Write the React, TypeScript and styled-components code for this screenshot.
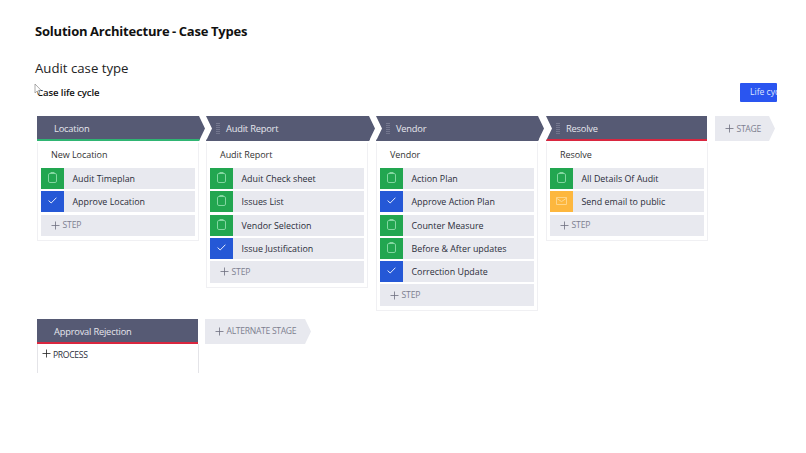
import React from 'react';
import styled, { createGlobalStyle } from 'styled-components';

const GlobalStyle = createGlobalStyle`
    html, body {
        margin: 0;
        background: #fff;
        font-family: 'Open Sans', 'Liberation Sans', sans-serif;
    }
`;

const HEADER = '#565a74';
const ROW = '#e8e9ef';
const GREEN = '#22a650';
const BLUE = '#2558d6';
const ORANGE = '#fdb73e';

const Page = styled.div`
    position: relative;
    width: 806px;
    height: 453px;
    padding: 21px 0 0 35px;
    box-sizing: border-box;
    overflow: hidden;
`;

const Title = styled.h1`
    margin: 0;
    height: 20px;
    font-size: 13px;
    line-height: 20px;
    font-weight: 700;
    letter-spacing: -0.2px;
    word-spacing: -0.5px;
    color: #111;
`;

const SubTitle = styled.h2`
    margin: 17px 0 0;
    height: 20px;
    font-size: 13.2px;
    line-height: 20px;
    font-weight: 400;
    color: #222;
`;

const CycleBar = styled.div`
    display: flex;
    justify-content: space-between;
    align-items: center;
    width: 740px;
    height: 19px;
    margin: 5px 0 0 2px;
`;

const CycleLabel = styled.span`
    font-size: 9.6px;
    font-weight: 600;
    letter-spacing: -0.1px;
    color: #111;
`;

const CycleButton = styled.div`
    width: 37px;
    height: 19px;
    padding-left: 10px;
    box-sizing: border-box;
    overflow: hidden;
    white-space: nowrap;
    background: #2a55f0;
    border-radius: 1px;
    color: #dfe6ff;
    font-size: 8.6px;
    line-height: 19px;
`;

const Board = styled.div`
    display: grid;
    grid-template-columns: 169px 170px 170px 169px auto;
    align-items: start;
    margin: 14px 0 0 2px;
`;

const Lane = styled.div`
    display: flex;
    flex-direction: column;
`;

const StageHeader = styled.div<{ $width: number; $line: string; $notch?: boolean; $point?: boolean }>`
    display: flex;
    align-items: center;
    width: ${(p) => p.$width}px;
    height: 25px;
    box-sizing: border-box;
    padding: 2px 0 0 ${(p) => (p.$notch ? 10 : 17)}px;
    background: ${HEADER};
    border-bottom: 2px solid ${(p) => p.$line};
    color: #e6e7ee;
    font-size: 9.3px;
    letter-spacing: -0.2px;
    clip-path: polygon(
        0 0,
        ${(p) => (p.$point ? 'calc(100% - 6px) 0, 100% 50%, calc(100% - 6px) 100%' : '100% 0, 100% 100%')},
        0 100%
        ${(p) => (p.$notch ? ', 6px 50%' : '')}
    );
`;

const GripIcon = styled.svg`
    flex: none;
    margin-right: 6px;
`;

const Card = styled.div`
    width: 162px;
    margin-top: 2px;
    padding: 0 3px 4px;
    box-sizing: border-box;
    border: 1px solid #f0f0f3;
    border-top: none;
`;

const CardTitle = styled.div`
    height: 25px;
    padding-left: 10px;
    color: #333;
    font-size: 9px;
    letter-spacing: -0.05px;
    line-height: 23px;
`;

const Rows = styled.div`
    display: flex;
    flex-direction: column;
    gap: 2.3px;
`;

const StepRow = styled.div`
    display: flex;
    align-items: center;
    height: 21px;
    background: ${ROW};
    color: #2b2d3a;
    font-size: 8.9px;
`;

const StepIcon = styled.span<{ $color: string }>`
    display: flex;
    align-items: center;
    justify-content: center;
    flex: none;
    width: 23px;
    height: 21px;
    padding-bottom: 2px;
    box-sizing: border-box;
    margin-right: 8.5px;
    background: ${(p) => p.$color};
`;

const AddStep = styled.div`
    display: flex;
    align-items: center;
    gap: 2.5px;
    height: 21.5px;
    padding-left: 10px;
    background: ${ROW};
    color: #7d7f8f;
    font-size: 8.6px;
    letter-spacing: -0.15px;
`;

const AddStage = styled.div<{ $width: number }>`
    display: flex;
    align-items: center;
    gap: 2.5px;
    width: ${(p) => p.$width}px;
    height: 25px;
    box-sizing: border-box;
    padding-left: 10px;
    background: ${ROW};
    color: #7d7f8f;
    font-size: 8.6px;
    letter-spacing: -0.3px;
    clip-path: polygon(0 0, calc(100% - 6px) 0, 100% 50%, calc(100% - 6px) 100%, 0 100%);
`;

const AltRow = styled.div`
    display: flex;
    align-items: flex-start;
    gap: 6px;
    margin: 8px 0 0 2px;
`;

const AltCard = styled.div`
    display: flex;
    align-items: flex-start;
    gap: 2px;
    width: 162px;
    height: 29px;
    padding: 5px 0 0 4px;
    box-sizing: border-box;
    border-left: 1px solid #e4e4e8;
    border-right: 1px solid #e4e4e8;
    color: #2b2d3a;
    font-size: 8.6px;
    letter-spacing: -0.3px;
`;

const Cursor = styled.svg`
    position: absolute;
    left: 34px;
    top: 83px;
`;

const Grip = () => (
    <GripIcon width="4" height="11" viewBox="0 0 4 11" fill="#9c9eb2">
        {[0, 2, 4, 6, 8, 10].map((y) => (
            <React.Fragment key={y}>
                <circle cx="1" cy={y + 0.5} r="0.55" />
                <circle cx="3" cy={y + 0.5} r="0.55" />
            </React.Fragment>
        ))}
    </GripIcon>
);

const ClipboardIcon = () => (
    <svg width="9" height="11" viewBox="0 0 9 11" fill="none" stroke="#8fdcaa" strokeWidth="0.9">
        <rect x="0.5" y="1.5" width="8" height="9" rx="1.4" />
        <path d="M2.8 1.5V.5h3.4v1" />
    </svg>
);

const CheckIcon = () => (
    <svg width="9" height="7" viewBox="0 0 9 7" fill="none" stroke="#fff" strokeWidth="0.9">
        <path d="M.6 3.6 3.2 6 8.4.7" />
    </svg>
);

const MailIcon = () => (
    <svg width="11" height="8" viewBox="0 0 11 8" fill="none" stroke="#fee0a5" strokeWidth="0.8">
        <rect x="0.4" y="0.4" width="10.2" height="7.2" rx="0.5" />
        <path d="M0.5 1.2 5.5 4.6l5-3.4" />
    </svg>
);

const PlusIcon = ({ color }: { color: string }) => (
    <svg width="9" height="9" viewBox="0 0 9 9" fill="none" stroke={color} strokeWidth="0.8">
        <path d="M4.5 0.5v8M0.5 4.5h8" />
    </svg>
);

type Kind = 'task' | 'approve' | 'mail';

const ICONS: Record<Kind, { color: string; icon: React.ReactNode }> = {
    task: { color: GREEN, icon: <ClipboardIcon /> },
    approve: { color: BLUE, icon: <CheckIcon /> },
    mail: { color: ORANGE, icon: <MailIcon /> },
};

interface Stage {
    name: string;
    title: string;
    line: string;
    width: number;
    grip: boolean;
    point: boolean;
    steps: [Kind, string][];
}

const STAGES: Stage[] = [
    {
        name: 'Location',
        title: 'New Location',
        line: '#2fb573',
        width: 168,
        grip: false,
        point: true,
        steps: [
            ['task', 'Audit Timeplan'],
            ['approve', 'Approve Location'],
        ],
    },
    {
        name: 'Audit Report',
        title: 'Audit Report',
        line: HEADER,
        width: 169,
        grip: true,
        point: true,
        steps: [
            ['task', 'Aduit Check sheet'],
            ['task', 'Issues List'],
            ['task', 'Vendor Selection'],
            ['approve', 'Issue Justification'],
        ],
    },
    {
        name: 'Vendor',
        title: 'Vendor',
        line: HEADER,
        width: 168,
        grip: true,
        point: true,
        steps: [
            ['task', 'Action Plan'],
            ['approve', 'Approve Action Plan'],
            ['task', 'Counter Measure'],
            ['task', 'Before & After updates'],
            ['approve', 'Correction Update'],
        ],
    },
    {
        name: 'Resolve',
        title: 'Resolve',
        line: '#d9263f',
        width: 161,
        grip: true,
        point: false,
        steps: [
            ['task', 'All Details Of Audit'],
            ['mail', 'Send email to public'],
        ],
    },
];

const App = () => {
    return (
        <Page>
            <GlobalStyle />
            <Title>Solution Architecture - Case Types</Title>
            <SubTitle>Audit case type</SubTitle>
            <CycleBar>
                <CycleLabel>Case life cycle</CycleLabel>
                <CycleButton>Life cycle</CycleButton>
            </CycleBar>
            <Board>
                {STAGES.map((stage) => (
                    <Lane key={stage.name}>
                        <StageHeader $width={stage.width} $line={stage.line} $notch={stage.grip} $point={stage.point}>
                            {stage.grip && <Grip />}
                            {stage.name}
                        </StageHeader>
                        <Card>
                            <CardTitle>{stage.title}</CardTitle>
                            <Rows>
                                {stage.steps.map(([kind, label]) => (
                                    <StepRow key={label}>
                                        <StepIcon $color={ICONS[kind].color}>{ICONS[kind].icon}</StepIcon>
                                        {label}
                                    </StepRow>
                                ))}
                                <AddStep>
                                    <PlusIcon color="#6d6f7f" />
                                    STEP
                                </AddStep>
                            </Rows>
                        </Card>
                    </Lane>
                ))}
                <AddStage $width={60}>
                    <PlusIcon color="#6d6f7f" />
                    STAGE
                </AddStage>
            </Board>
            <AltRow>
                <Lane>
                    <StageHeader $width={161} $line="#d9263f">
                        Approval Rejection
                    </StageHeader>
                    <AltCard>
                        <PlusIcon color="#222" />
                        PROCESS
                    </AltCard>
                </Lane>
                <AddStage $width={106}>
                    <PlusIcon color="#6d6f7f" />
                    ALTERNATE STAGE
                </AddStage>
            </AltRow>
            <Cursor width="8" height="12" viewBox="0 0 8 12" fill="#fff" stroke="#888" strokeWidth="0.7">
                <path d="M1 1v9l2.2-2 1.6 3 1.2-.6-1.5-3H7.2z" />
            </Cursor>
        </Page>
    );
};

export default App;
